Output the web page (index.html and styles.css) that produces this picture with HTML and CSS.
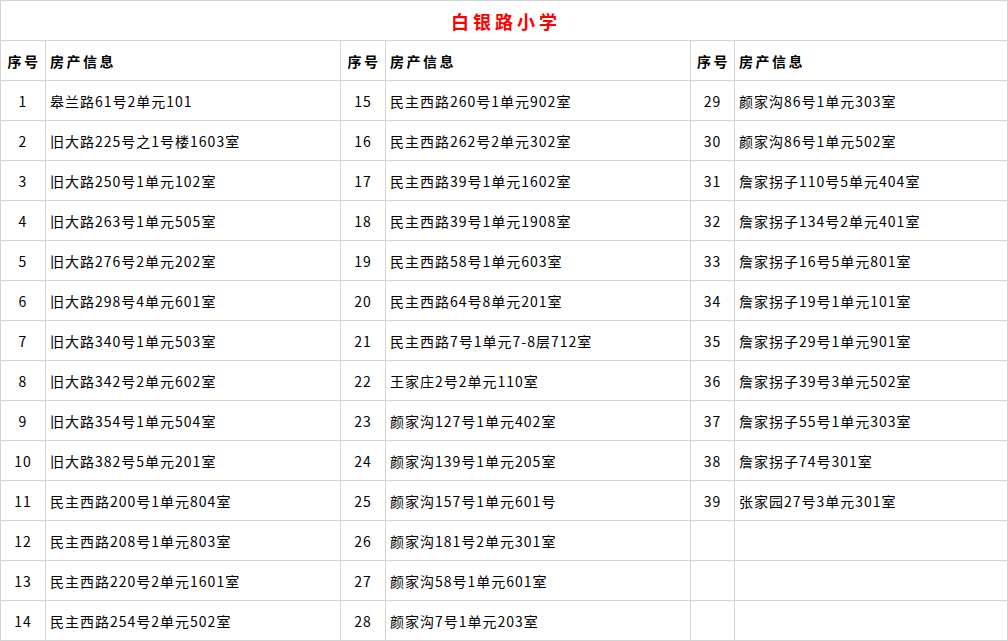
FILE: index.html
```html
<!DOCTYPE html>
<html lang="zh-CN">
<head>
<meta charset="utf-8">
<title>白银路小学</title>
<link rel="stylesheet" href="styles.css">
</head>
<body>
<div class="sheet">
  <div class="cell title">白银路小学</div>

  <div class="cell head num">序号</div><div class="cell head info">房产信息</div>
  <div class="cell head num">序号</div><div class="cell head info">房产信息</div>
  <div class="cell head num">序号</div><div class="cell head info">房产信息</div>

  <div class="cell num">1</div><div class="cell info">皋兰路61号2单元101</div>
  <div class="cell num">15</div><div class="cell info">民主西路260号1单元902室</div>
  <div class="cell num">29</div><div class="cell info">颜家沟86号1单元303室</div>

  <div class="cell num">2</div><div class="cell info">旧大路225号之1号楼1603室</div>
  <div class="cell num">16</div><div class="cell info">民主西路262号2单元302室</div>
  <div class="cell num">30</div><div class="cell info">颜家沟86号1单元502室</div>

  <div class="cell num">3</div><div class="cell info">旧大路250号1单元102室</div>
  <div class="cell num">17</div><div class="cell info">民主西路39号1单元1602室</div>
  <div class="cell num">31</div><div class="cell info">詹家拐子110号5单元404室</div>

  <div class="cell num">4</div><div class="cell info">旧大路263号1单元505室</div>
  <div class="cell num">18</div><div class="cell info">民主西路39号1单元1908室</div>
  <div class="cell num">32</div><div class="cell info">詹家拐子134号2单元401室</div>

  <div class="cell num">5</div><div class="cell info">旧大路276号2单元202室</div>
  <div class="cell num">19</div><div class="cell info">民主西路58号1单元603室</div>
  <div class="cell num">33</div><div class="cell info">詹家拐子16号5单元801室</div>

  <div class="cell num">6</div><div class="cell info">旧大路298号4单元601室</div>
  <div class="cell num">20</div><div class="cell info">民主西路64号8单元201室</div>
  <div class="cell num">34</div><div class="cell info">詹家拐子19号1单元101室</div>

  <div class="cell num">7</div><div class="cell info">旧大路340号1单元503室</div>
  <div class="cell num">21</div><div class="cell info">民主西路7号1单元7-8层712室</div>
  <div class="cell num">35</div><div class="cell info">詹家拐子29号1单元901室</div>

  <div class="cell num">8</div><div class="cell info">旧大路342号2单元602室</div>
  <div class="cell num">22</div><div class="cell info">王家庄2号2单元110室</div>
  <div class="cell num">36</div><div class="cell info">詹家拐子39号3单元502室</div>

  <div class="cell num">9</div><div class="cell info">旧大路354号1单元504室</div>
  <div class="cell num">23</div><div class="cell info">颜家沟127号1单元402室</div>
  <div class="cell num">37</div><div class="cell info">詹家拐子55号1单元303室</div>

  <div class="cell num">10</div><div class="cell info">旧大路382号5单元201室</div>
  <div class="cell num">24</div><div class="cell info">颜家沟139号1单元205室</div>
  <div class="cell num">38</div><div class="cell info">詹家拐子74号301室</div>

  <div class="cell num">11</div><div class="cell info">民主西路200号1单元804室</div>
  <div class="cell num">25</div><div class="cell info">颜家沟157号1单元601号</div>
  <div class="cell num">39</div><div class="cell info">张家园27号3单元301室</div>

  <div class="cell num">12</div><div class="cell info">民主西路208号1单元803室</div>
  <div class="cell num">26</div><div class="cell info">颜家沟181号2单元301室</div>
  <div class="cell num"></div><div class="cell info"></div>

  <div class="cell num">13</div><div class="cell info">民主西路220号2单元1601室</div>
  <div class="cell num">27</div><div class="cell info">颜家沟58号1单元601室</div>
  <div class="cell num"></div><div class="cell info"></div>

  <div class="cell num">14</div><div class="cell info">民主西路254号2单元502室</div>
  <div class="cell num">28</div><div class="cell info">颜家沟7号1单元203室</div>
  <div class="cell num"></div><div class="cell info"></div>
</div>
</body>
</html>
```
FILE: styles.css
```css
html, body {
  margin: 0;
  padding: 0;
  background: #ffffff;
}

.sheet {
  display: grid;
  grid-template-columns: 44px 294px 44px 304px 43px 272px;
  grid-auto-rows: 39px;
  gap: 1px;
  padding: 1px;
  width: 1008px;
  box-sizing: border-box;
  background: #d4d4d4;
  font-family: "Noto Sans CJK SC", "Noto Sans", sans-serif;
  font-size: 14px;
  color: #000000;
}

.cell {
  background: #ffffff;
  display: flex;
  align-items: center;
  white-space: nowrap;
  overflow: hidden;
  letter-spacing: 1px;
}

.title {
  grid-column: 1 / -1;
  justify-content: center;
  color: #ff0000;
  font-size: 18px;
  font-weight: bold;
  letter-spacing: 4px;
  padding-left: 4px;
}

.num {
  justify-content: center;
}

.info {
  padding-left: 4px;
}

.head {
  font-weight: bold;
  letter-spacing: 2.5px;
}

.head.num {
  padding-left: 2px;
}
```
